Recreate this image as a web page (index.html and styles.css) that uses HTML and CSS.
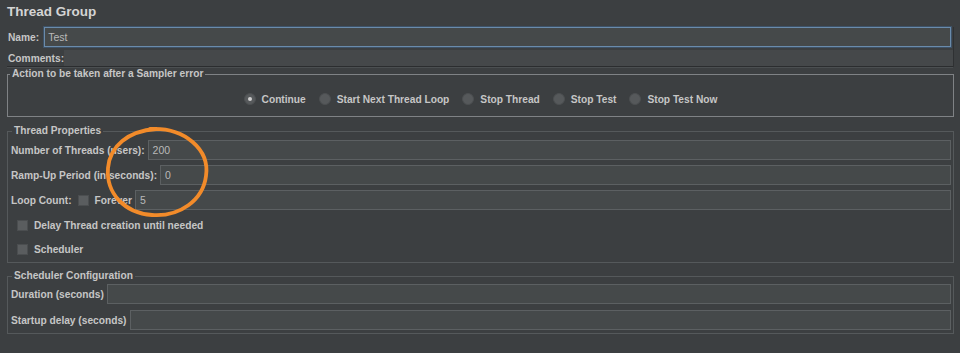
FILE: index.html
```html
<!DOCTYPE html>
<html lang="en">
<head>
  <meta charset="UTF-8" />
  <title>Thread Group</title>
  <link rel="stylesheet" href="styles.css">
</head>
<body>
  <div class="page">
    <div class="title">Thread Group</div>

    <div class="head">
      <div class="row name-row">
        <span class="lbl">Name:</span>
        <div class="field focus">Test</div>
      </div>
      <div class="row comments-row">
        <span class="lbl">Comments:</span>
        <div class="comments"></div>
      </div>
    </div>

    <fieldset class="box box-error">
      <legend>Action to be taken after a Sampler error</legend>
      <div class="radios">
        <span class="opt"><span class="radio on"></span>Continue</span>
        <span class="opt"><span class="radio"></span>Start Next Thread Loop</span>
        <span class="opt"><span class="radio"></span>Stop Thread</span>
        <span class="opt"><span class="radio"></span>Stop Test</span>
        <span class="opt"><span class="radio"></span>Stop Test Now</span>
      </div>
    </fieldset>

    <fieldset class="box props">
      <legend>Thread Properties</legend>
      <div class="row input-row">
        <span class="lbl">Number of Threads (users):</span>
        <div class="field">200</div>
      </div>
      <div class="row input-row">
        <span class="lbl">Ramp-Up Period (in seconds):</span>
        <div class="field">0</div>
      </div>
      <div class="row input-row loop-row">
        <span class="lbl">Loop Count:</span>
        <span class="check"></span>
        <span class="lbl">Forever</span>
        <div class="field">5</div>
      </div>
      <div class="row check-row">
        <span class="check"></span>
        <span class="lbl">Delay Thread creation until needed</span>
      </div>
      <div class="row check-row last">
        <span class="check"></span>
        <span class="lbl">Scheduler</span>
      </div>
    </fieldset>

    <fieldset class="box sched">
      <legend>Scheduler Configuration</legend>
      <div class="row input-row">
        <span class="lbl">Duration (seconds)</span>
        <div class="field"></div>
      </div>
      <div class="row input-row">
        <span class="lbl">Startup delay (seconds)</span>
        <div class="field"></div>
      </div>
    </fieldset>
  </div>

  <!-- hand-drawn highlight over the screenshot -->
  <svg class="mark" width="960" height="353" viewBox="0 0 960 353">
    <path d="M150 129 C 185 127, 210 150, 206 176 C 203 200, 180 217, 152 215 C 124 213, 106 193, 108 168 C 110 146, 128 131, 156 129" fill="none" stroke="#f28b2a" stroke-width="3.8" stroke-linecap="round"/>
  </svg>
</body>
</html>
```

FILE: styles.css
```css
body {
  margin: 0;
  height: 353px;
  overflow: hidden;
  position: relative;
  background: #3c3f41;
  font-family: 'Liberation Sans', Arial, sans-serif;
  font-size: 10.2px;
  font-weight: bold;
  color: #c6c6c6;
}
.page {
  padding: 0 6px 0 7px;
}
.title {
  height: 24px;
  line-height: 24px;
  font-size: 13.5px;
  color: #d4d4d4;
}
.head {
  border-right: 1px solid #2f3133;
}
.row {
  display: flex;
  align-items: center;
}
.lbl {
  white-space: nowrap;
}
.name-row {
  margin-top: 3px;
  height: 20px;
  padding-left: 1px;
  gap: 5px;
  padding-right: 2px;
}
.comments-row {
  margin-top: 3px;
  height: 16px;
  padding-left: 1px;
  border-bottom: 1px solid #2b2d2f;
  box-shadow: 0 1px 0 #4b4f51;
}
.comments {
  flex: 1;
  align-self: stretch;
  background: #45484a;
}
.field {
  flex: 1;
  height: 20px;
  box-sizing: border-box;
  background: #45494a;
  border: 1px solid #5c6062;
  padding: 0 4px;
  line-height: 18px;
  font-size: 10.5px;
  font-weight: normal;
  color: #b9b9b9;
}
.field.focus {
  border-color: #6a8bab;
  box-shadow: 0 0 0 1px #3e5267;
  padding-left: 3px;
}

.box {
  margin: 0;
  padding: 0;
  border: 1px solid #55595b;
  min-inline-size: 0;
}
.box legend {
  padding: 0 2px;
  margin-left: 1px;
  line-height: 14px;
  color: #c6c6c6;
}
.box-error {
  border-color: #7f8285;
  padding: 8px 0 7px;
}
.box-error legend {
  margin-left: 2px;
}
.radios {
  display: flex;
  justify-content: center;
  align-items: center;
  height: 20px;
  gap: 13px;
}
.opt {
  display: flex;
  align-items: center;
  gap: 6px;
}
.radio {
  width: 12px;
  height: 12px;
  box-sizing: border-box;
  border-radius: 50%;
  background: #56595b;
  border: 1px solid #4c4f51;
  display: flex;
  align-items: center;
  justify-content: center;
}
.radio.on::after {
  content: "";
  width: 4px;
  height: 4px;
  border-radius: 50%;
  background: #d0d0d0;
}

.props {
  margin-top: 7px;
  padding: 2px 2px 3px 3px;
}
.sched {
  margin-top: 6px;
  padding: 1px 2px 3px 3px;
}
.input-row {
  height: 20px;
  gap: 3px;
  margin-bottom: 5px;
}
.sched .input-row {
  margin-bottom: 6px;
}
.sched .input-row:last-child {
  margin-bottom: 0;
}
.loop-row .check {
  margin: 0 3px 0 3px;
}
.loop-row .field {
  margin-left: 0;
}
.check {
  width: 11px;
  height: 11px;
  box-sizing: border-box;
  background: #5a5d5f;
  border: 1px solid #4b4e50;
}
.check-row {
  height: 20px;
  gap: 6px;
  padding-left: 6px;
  margin-bottom: 4px;
}
.check-row.last {
  margin-bottom: 0;
}

.mark {
  position: absolute;
  left: 0;
  top: 0;
  pointer-events: none;
}
```
